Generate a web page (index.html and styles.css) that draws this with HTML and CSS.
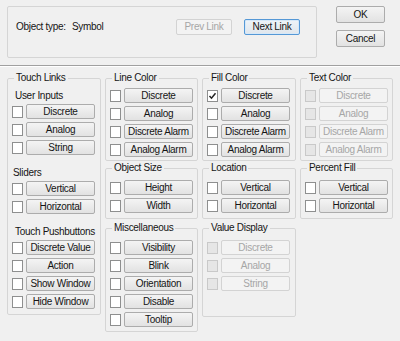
FILE: index.html
```html
<!DOCTYPE html>
<html>
<head>
<meta charset="utf-8">
<link rel="stylesheet" href="styles.css">
</head>
<body>
<div class="top">
  <div class="panel">
    <span class="lbl">Object type:</span><span class="val">Symbol</span>
    <div class="links">
      <button class="btn dis">Prev Link</button>
      <button class="btn def">Next Link</button>
    </div>
  </div>
  <div class="actions">
    <button class="btn">OK</button>
    <button class="btn">Cancel</button>
  </div>
</div>
<div class="sep"></div>
<div class="main">
  <div class="col">
    <fieldset class="grp touch">
      <legend>Touch Links</legend>
      <div class="sub">User Inputs</div>
      <div class="rows">
        <div class="row"><span class="cb"></span><button class="btn">Discrete</button></div>
        <div class="row"><span class="cb"></span><button class="btn">Analog</button></div>
        <div class="row"><span class="cb"></span><button class="btn">String</button></div>
      </div>
      <div class="sub sub-gap sub-tight">Sliders</div>
      <div class="rows">
        <div class="row"><span class="cb"></span><button class="btn">Vertical</button></div>
        <div class="row"><span class="cb"></span><button class="btn">Horizontal</button></div>
      </div>
      <div class="sub sub-gap">Touch Pushbuttons</div>
      <div class="rows">
        <div class="row"><span class="cb"></span><button class="btn">Discrete Value</button></div>
        <div class="row"><span class="cb"></span><button class="btn">Action</button></div>
        <div class="row"><span class="cb"></span><button class="btn">Show Window</button></div>
        <div class="row"><span class="cb"></span><button class="btn">Hide Window</button></div>
      </div>
    </fieldset>
  </div>
  <div class="col">
    <fieldset class="grp first">
      <legend>Line Color</legend>
      <div class="rows">
        <div class="row"><span class="cb"></span><button class="btn">Discrete</button></div>
        <div class="row"><span class="cb"></span><button class="btn">Analog</button></div>
        <div class="row"><span class="cb"></span><button class="btn">Discrete Alarm</button></div>
        <div class="row"><span class="cb"></span><button class="btn">Analog Alarm</button></div>
      </div>
    </fieldset>
    <fieldset class="grp second">
      <legend>Object Size</legend>
      <div class="rows">
        <div class="row"><span class="cb"></span><button class="btn">Height</button></div>
        <div class="row"><span class="cb"></span><button class="btn">Width</button></div>
      </div>
    </fieldset>
    <fieldset class="grp third">
      <legend>Miscellaneous</legend>
      <div class="rows">
        <div class="row"><span class="cb"></span><button class="btn">Visibility</button></div>
        <div class="row"><span class="cb"></span><button class="btn">Blink</button></div>
        <div class="row"><span class="cb"></span><button class="btn">Orientation</button></div>
        <div class="row"><span class="cb"></span><button class="btn">Disable</button></div>
        <div class="row"><span class="cb"></span><button class="btn">Tooltip</button></div>
      </div>
    </fieldset>
  </div>
  <div class="col">
    <fieldset class="grp first">
      <legend>Fill Color</legend>
      <div class="rows">
        <div class="row"><span class="cb on"><svg width="9" height="10" viewBox="0 0 9 10"><path d="M1.5 5 L3.5 7.2 L7.5 2.2" fill="none" stroke="#222" stroke-width="1.5"/></svg></span><button class="btn">Discrete</button></div>
        <div class="row"><span class="cb"></span><button class="btn">Analog</button></div>
        <div class="row"><span class="cb"></span><button class="btn">Discrete Alarm</button></div>
        <div class="row"><span class="cb"></span><button class="btn">Analog Alarm</button></div>
      </div>
    </fieldset>
    <fieldset class="grp second">
      <legend>Location</legend>
      <div class="rows">
        <div class="row"><span class="cb"></span><button class="btn">Vertical</button></div>
        <div class="row"><span class="cb"></span><button class="btn">Horizontal</button></div>
      </div>
    </fieldset>
    <fieldset class="grp third value">
      <legend>Value Display</legend>
      <div class="rows">
        <div class="row"><span class="cb dis"></span><button class="btn dis">Discrete</button></div>
        <div class="row"><span class="cb dis"></span><button class="btn dis">Analog</button></div>
        <div class="row"><span class="cb dis"></span><button class="btn dis">String</button></div>
      </div>
    </fieldset>
  </div>
  <div class="col">
    <fieldset class="grp first">
      <legend>Text Color</legend>
      <div class="rows">
        <div class="row"><span class="cb dis"></span><button class="btn dis">Discrete</button></div>
        <div class="row"><span class="cb dis"></span><button class="btn dis">Analog</button></div>
        <div class="row"><span class="cb dis"></span><button class="btn dis">Discrete Alarm</button></div>
        <div class="row"><span class="cb dis"></span><button class="btn dis">Analog Alarm</button></div>
      </div>
    </fieldset>
    <fieldset class="grp second">
      <legend>Percent Fill</legend>
      <div class="rows">
        <div class="row"><span class="cb"></span><button class="btn">Vertical</button></div>
        <div class="row"><span class="cb"></span><button class="btn">Horizontal</button></div>
      </div>
    </fieldset>
  </div>
</div>
</body>
</html>
```
FILE: styles.css
```css
* { box-sizing: border-box; }
html, body { margin: 0; }
body {
  width: 400px;
  height: 341px;
  overflow: hidden;
  background: #f0f0f0;
  font-family: "Liberation Sans", Arial, sans-serif;
  font-size: 10px;
  letter-spacing: -0.3px;
  color: #151515;
}

.top {
  display: flex;
  height: 65px;
  padding: 6px 15px 0 7px;
}
.panel {
  width: 310px;
  height: 52px;
  border: 1px solid #d5d5d5;
  border-radius: 2px;
  display: flex;
  align-items: flex-start;
  padding: 12px 16px 0 8px;
}
.panel .lbl { width: 56px; line-height: 16px; }
.panel .val { line-height: 16px; }
.links { margin-left: auto; display: flex; gap: 12px; }
.links .btn { width: 56px; height: 16px; line-height: 14px; }
.actions { margin-left: auto; display: flex; flex-direction: column; gap: 7px; }
.actions .btn { width: 49px; height: 17px; line-height: 15px; }

.sep {
  border-top: 1px solid #a0a0a0;
  border-bottom: 1px solid #ffffff;
}

.main {
  display: grid;
  grid-template-columns: 94px 93px 94px 93px;
  column-gap: 4px;
  padding: 5px 0 0 7px;
  align-items: start;
}
.col { display: flex; flex-direction: column; }

.grp {
  margin: 0;
  min-width: 0;
  border: 1px solid #d5d5d5;
  border-radius: 2px;
  padding: 4px 0 3px 4px;
}
.grp legend {
  padding: 0 2px;
  margin-left: 2px;
  line-height: 12px;
}
.grp.first { padding: 4px 0 3px 4px; }
.grp.second { margin-top: 1px; padding: 6px 0 5px 4px; }
.grp.third { margin-top: 3px; padding: 6px 0 4px 4px; }
.grp.value { padding-bottom: 25px; }
.grp.touch { padding: 0 0 5px 4px; }

.sub { line-height: 12px; margin: 6px 0 2px 3px; }
.sub-gap { margin-top: 12px; }
.sub-tight { margin-left: 1px; }

.rows { display: flex; flex-direction: column; gap: 3px; }
.row { display: flex; align-items: center; height: 15px; }

.cb {
  flex: none;
  width: 11px;
  height: 12px;
  margin-right: 3px;
  border: 1px solid #8e8f8f;
  background: #ffffff;
  display: flex;
  align-items: center;
  justify-content: center;
}
.cb.dis { border-color: #c9c9c9; background: #e6e6e6; }

.btn {
  flex: none;
  width: 69px;
  height: 15px;
  padding: 0;
  margin: 0;
  border: 1px solid #acacac;
  border-radius: 2px;
  background: linear-gradient(#f4f4f4, #e2e2e2);
  font: inherit;
  letter-spacing: inherit;
  color: inherit;
  text-align: center;
  line-height: 13px;
  white-space: nowrap;
}
.btn.dis {
  color: #a6a6a6;
  border-color: #d3d3d3;
  background: #f3f3f3;
}
.btn.def {
  border-color: #5598d6;
  box-shadow: inset 0 0 0 1px #d6e8f8;
  background: linear-gradient(#eef3f8, #e0e6ec);
}
```
